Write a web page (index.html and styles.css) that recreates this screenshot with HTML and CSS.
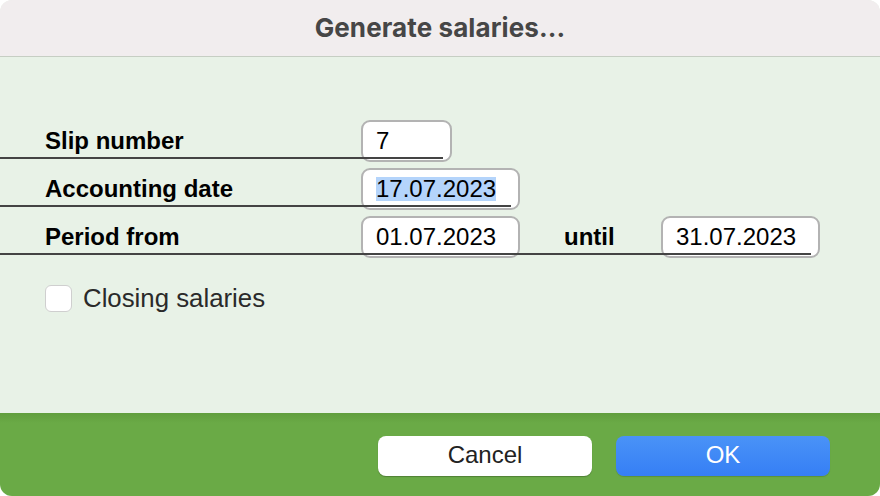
FILE: index.html
```html
<!DOCTYPE html>
<html lang="en">
<head>
<meta charset="utf-8">
<title>Generate salaries...</title>
<link rel="stylesheet" href="styles.css">
</head>
<body>
<div class="dialog">
  <header class="titlebar">Generate salaries...</header>
  <main class="content">
    <div class="row">
      <span class="label">Slip number</span>
      <span class="field w-short">7</span>
    </div>
    <div class="row">
      <span class="label">Accounting date</span>
      <span class="field w-date"><span class="sel">17.07.2023</span></span>
    </div>
    <div class="row">
      <span class="label">Period from</span>
      <span class="field w-date">01.07.2023</span>
      <span class="label-mid">until</span>
      <span class="field w-date">31.07.2023</span>
    </div>
    <label class="check">
      <span class="box"></span>
      <span class="check-text">Closing salaries</span>
    </label>
  </main>
  <footer class="footer">
    <button class="btn btn-cancel">Cancel</button>
    <button class="btn btn-ok">OK</button>
  </footer>
</div>
</body>
</html>
```
FILE: styles.css
```css
html, body {
  margin: 0;
  padding: 0;
  background: #ffffff;
}
body {
  width: 880px;
  height: 496px;
  overflow: hidden;
  font-family: "Liberation Sans", Arial, sans-serif;
}
.dialog {
  width: 880px;
  height: 496px;
  display: flex;
  flex-direction: column;
  border-radius: 12px;
  overflow: hidden;
  background: #e8f2e7;
}
.titlebar {
  flex: 0 0 auto;
  height: 57px;
  box-sizing: border-box;
  background: #f1edee;
  border-bottom: 1px solid #c6cec3;
  display: flex;
  align-items: center;
  justify-content: center;
  font-family: Inter, "Liberation Sans", sans-serif;
  font-weight: 700;
  font-size: 26px;
  letter-spacing: 0.1px;
  color: #464646;
  padding-bottom: 2px;
}
.content {
  flex: 1 1 auto;
  padding-top: 63px;
  box-sizing: border-box;
}
.row {
  position: relative;
  display: flex;
  align-items: center;
  width: max-content;
  height: 42px;
  margin-bottom: 6px;
}
.row::after {
  content: "";
  position: absolute;
  left: 0;
  right: 9px;
  bottom: 3px;
  height: 2px;
  background: #444444;
}
.label {
  box-sizing: border-box;
  width: 361px;
  padding-left: 45px;
  font-weight: bold;
  font-size: 24px;
  color: #000;
}
.label-mid {
  box-sizing: border-box;
  width: 141px;
  padding-left: 44px;
  font-weight: bold;
  font-size: 24px;
  color: #000;
}
.field {
  box-sizing: border-box;
  height: 42px;
  background: #ffffff;
  border: 2px solid #b3b3b3;
  border-radius: 9px;
  padding-left: 13px;
  display: flex;
  align-items: center;
  font-size: 24px;
  color: #000;
}
.w-short { width: 91px; }
.w-date { width: 159px; }
.sel {
  background: #b4d4fb;
  line-height: 24px;
}
.check {
  display: flex;
  align-items: center;
  margin-top: 26px;
  padding-left: 45px;
  gap: 11px;
}
.box {
  box-sizing: border-box;
  width: 27px;
  height: 27px;
  background: #ffffff;
  border: 1px solid #cfcfcf;
  border-radius: 6px;
}
.check-text {
  font-size: 25.8px;
  color: #2a2a2a;
}
.footer {
  flex: 0 0 83px;
  height: 83px;
  box-sizing: border-box;
  background: linear-gradient(#609e3d 0px, #6aaa46 10px, #6aaa46 100%);
  display: flex;
  justify-content: flex-end;
  align-items: flex-start;
  gap: 24px;
  padding-top: 23px;
  padding-right: 50px;
}
.btn {
  width: 214px;
  height: 40px;
  border: none;
  border-radius: 8px;
  font-family: "Liberation Sans", Arial, sans-serif;
  font-size: 24px;
  padding: 0;
  padding-bottom: 3px;
}
.btn-cancel {
  background: #ffffff;
  color: #222222;
  box-shadow: 0 1px 1px rgba(0, 0, 0, 0.25);
}
.btn-ok {
  background: linear-gradient(#4a93f7, #367ff5);
  color: #ffffff;
  box-shadow: 0 1px 1px rgba(0, 0, 0, 0.15);
}
```
